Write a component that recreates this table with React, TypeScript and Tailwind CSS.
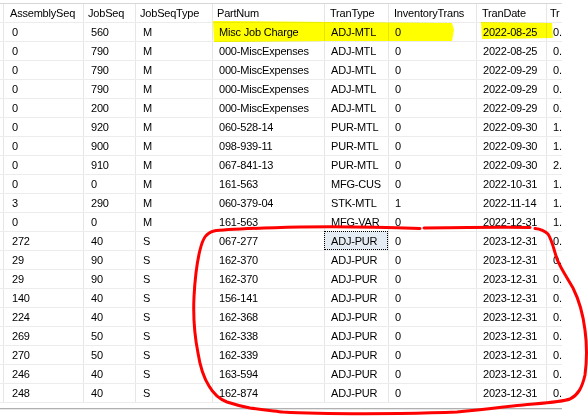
import React from 'react';

type Col = { label: string; w: string; head: string; cell: string };

const cols: Col[] = [
  { label: '', w: 'w-[4px]', head: '', cell: '' },
  { label: 'AssemblySeq', w: 'w-[80px]', head: 'pl-[6px]', cell: 'pl-[8px]' },
  { label: 'JobSeq', w: 'w-[52px]', head: 'pl-[4px]', cell: 'pl-[7px]' },
  { label: 'JobSeqType', w: 'w-[77px]', head: 'pl-[4px]', cell: 'pl-[7px]' },
  { label: 'PartNum', w: 'w-[112px]', head: 'pl-[4px]', cell: 'pl-[6px]' },
  { label: 'TranType', w: 'w-[64px]', head: 'pl-[5px]', cell: 'pl-[6px]' },
  { label: 'InventoryTrans', w: 'w-[88px]', head: 'pl-[5px]', cell: 'pl-[6px]' },
  { label: 'TranDate', w: 'w-[70px]', head: 'pl-[5px]', cell: 'pl-[6px]' },
  // last column is cut by the pane edge, only its first chars show
  { label: 'Tr', w: 'w-[15px]', head: 'pl-[3px]', cell: 'pl-[6px]' },
];

const rows: string[][] = [
  ['0', '560', 'M', 'Misc Job Charge', 'ADJ-MTL', '0', '2022-08-25', '0.'],
  ['0', '790', 'M', '000-MiscExpenses', 'ADJ-MTL', '0', '2022-08-25', '0.'],
  ['0', '790', 'M', '000-MiscExpenses', 'ADJ-MTL', '0', '2022-09-29', '0.'],
  ['0', '790', 'M', '000-MiscExpenses', 'ADJ-MTL', '0', '2022-09-29', '0.'],
  ['0', '200', 'M', '000-MiscExpenses', 'ADJ-MTL', '0', '2022-09-29', '0.'],
  ['0', '920', 'M', '060-528-14', 'PUR-MTL', '0', '2022-09-30', '1.'],
  ['0', '900', 'M', '098-939-11', 'PUR-MTL', '0', '2022-09-30', '1.'],
  ['0', '910', 'M', '067-841-13', 'PUR-MTL', '0', '2022-09-30', '2.'],
  ['0', '0', 'M', '161-563', 'MFG-CUS', '0', '2022-10-31', '1.'],
  ['3', '290', 'M', '060-379-04', 'STK-MTL', '1', '2022-11-14', '1.'],
  ['0', '0', 'M', '161-563', 'MFG-VAR', '0', '2022-12-31', '1.'],
  ['272', '40', 'S', '067-277', 'ADJ-PUR', '0', '2023-12-31', '0.'],
  ['29', '90', 'S', '162-370', 'ADJ-PUR', '0', '2023-12-31', '0.'],
  ['29', '90', 'S', '162-370', 'ADJ-PUR', '0', '2023-12-31', '0.'],
  ['140', '40', 'S', '156-141', 'ADJ-PUR', '0', '2023-12-31', '0.'],
  ['224', '40', 'S', '162-368', 'ADJ-PUR', '0', '2023-12-31', '0.'],
  ['269', '50', 'S', '162-338', 'ADJ-PUR', '0', '2023-12-31', '0.'],
  ['270', '50', 'S', '162-339', 'ADJ-PUR', '0', '2023-12-31', '0.'],
  ['246', '40', 'S', '163-594', 'ADJ-PUR', '0', '2023-12-31', '0.'],
  ['248', '40', 'S', '162-874', 'ADJ-PUR', '0', '2023-12-31', '0.'],
];

// highlighter + pen marks drawn over the grid
const Annotations: React.FC = () => (
  <svg className="absolute inset-0 pointer-events-none" width={588} height={417} viewBox="0 0 588 417">
    <g style={{ mixBlendMode: 'multiply' }} fill="#ffff00">
      <polygon points="213,21 330,22 452,23 454,30 452,41 330,41 214,42" />
      <polygon points="481,22 552,23 553,38 482,39" />
    </g>
    <g fill="none" stroke="#ff0000" strokeWidth={3} strokeLinecap="round" strokeLinejoin="round">
      <path d="M420,228.5 C380,227 330,226.5 300,227 C260,228 225,229 214,231 C206,233 203,238 200,250 C197,262 195,278 194,297 C193,318 195,338 198,353 C200,366 204,378 209,386 C213,393 219,399 227,402 C236,405 245,407 250,408 C265,410 275,411 283,412 C300,413 340,414 400,413.5 C430,413 445,412.5 457,412 C490,409 510,406 523,405 C545,403 562,402 570,399 C578,395 582,388 585,375 C587,360 587,345 585,330 C583,314 579,300 573,288 C566,276 560,267 557,259 C554,250 552,240 548,234 C544,230 540,229 535,228.5" />
      <path d="M424,228 C460,227.5 500,227 530,227.5" />
    </g>
  </svg>
);

const App: React.FC = () => {
  return (
    <div
      className="relative w-[588px] h-[417px] bg-white overflow-hidden text-[11px] text-black tracking-[-0.2px]"
      style={{ fontFamily: '"Liberation Sans", Arial, sans-serif' }}
    >
      <div className="pt-[3px]">
        <div className="w-[562px] border-t border-[#d6d6d6]">
          {/* header */}
          <div className="flex h-[19px] border-b border-[#ececec]">
            {cols.map((c, i) => (
              <div
                key={i}
                className={`${c.w} ${c.head} shrink-0 whitespace-nowrap flex items-center ${i < cols.length - 1 ? 'border-r border-[#e6e6e6]' : ''}`}
              >
                {c.label}
              </div>
            ))}
          </div>
          {/* body */}
          {rows.map((r, ri) => (
            <div key={ri} className="flex h-[19px] border-b border-[#ececec]">
              <div className="w-[4px] shrink-0 border-r border-[#e6e6e6]" />
              {r.map((v, ci) => {
                const c = cols[ci + 1];
                const focused = ri === 11 && ci === 4;
                return (
                  <div
                    key={ci}
                    className={`${c.w} ${c.cell} relative shrink-0 whitespace-nowrap flex items-center ${ci < r.length - 1 ? 'border-r border-[#e6e6e6]' : ''} ${focused ? 'bg-[#e6ecf3]' : ''}`}
                  >
                    {v}
                    {focused && (
                      <span className="absolute -left-px -top-px right-0 bottom-0 border border-dotted border-black" />
                    )}
                  </div>
                );
              })}
            </div>
          ))}
        </div>
        {/* scroll area edge */}
        <div className="mt-[5px] w-[562px] border-t border-[#b0b0b0]" />
        <div className="w-[562px] border-t border-[#e8e8e8]" />
      </div>
      <Annotations />
    </div>
  );
};

export default App;
